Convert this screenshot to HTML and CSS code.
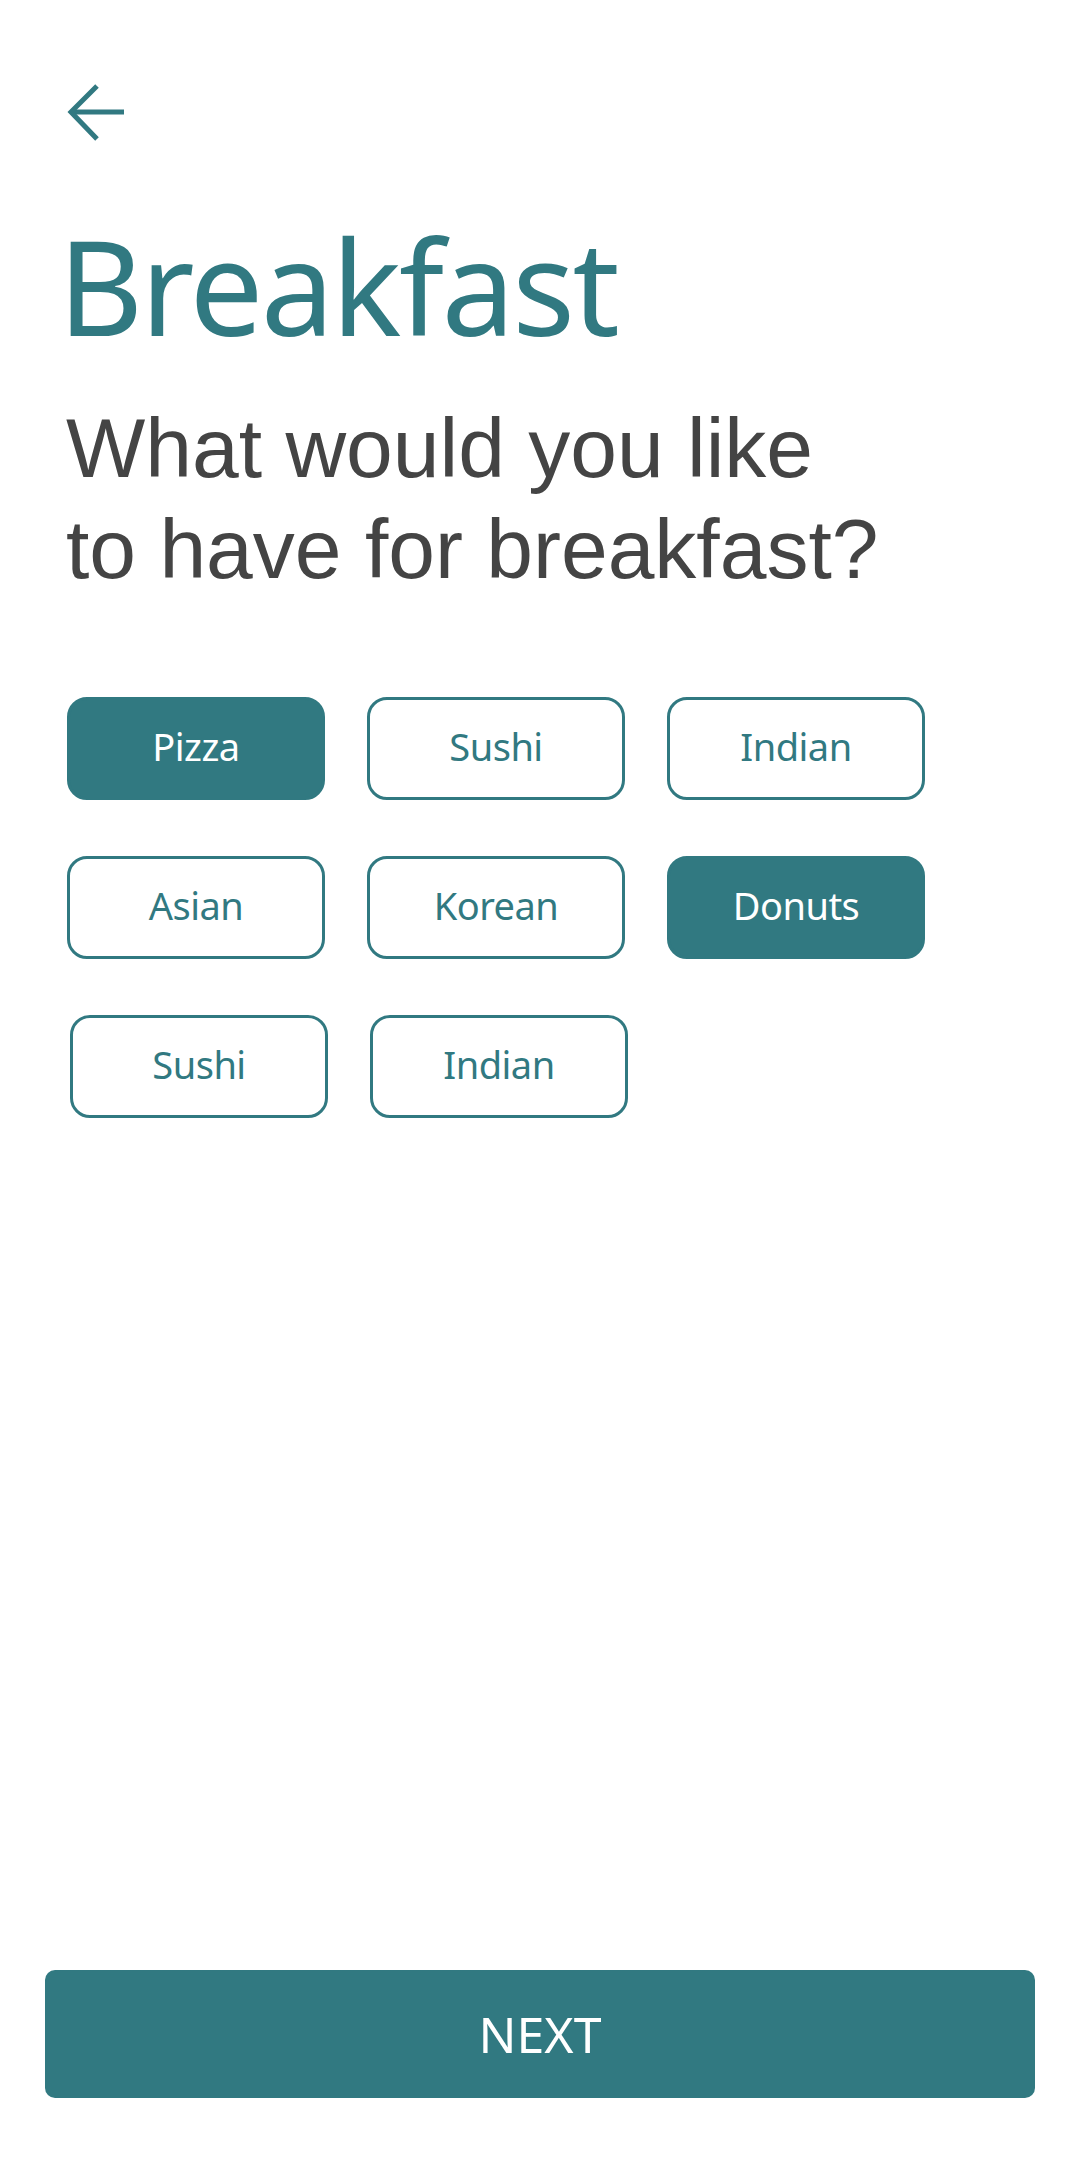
FILE: index.html
```html
<!DOCTYPE html>
<html lang="en">
<head>
<meta charset="utf-8">
<title>Breakfast</title>
<link rel="stylesheet" href="styles.css">
</head>
<body>
<div class="page">
  <div class="top">
    <button class="back" aria-label="Back">
      <svg width="60" height="60" viewBox="0 0 60 60" fill="none" stroke="#317981" stroke-width="5" stroke-linecap="butt" stroke-linejoin="miter">
        <path d="M58 29H6"/>
        <path d="M31 3L5 29L31 56"/>
      </svg>
    </button>
  </div>
  <h1 class="title">Breakfast</h1>
  <p class="question">What would you like<br>to have for breakfast?</p>
  <div class="chips">
    <div class="chip-row">
      <button class="chip selected">Pizza</button>
      <button class="chip">Sushi</button>
      <button class="chip">Indian</button>
    </div>
    <div class="chip-row">
      <button class="chip">Asian</button>
      <button class="chip">Korean</button>
      <button class="chip selected">Donuts</button>
    </div>
    <div class="chip-row shifted">
      <button class="chip">Sushi</button>
      <button class="chip">Indian</button>
    </div>
  </div>
  <div class="spacer"></div>
  <button class="next">NEXT</button>
</div>
</body>
</html>
```

FILE: styles.css
```css
* { box-sizing: border-box; }
html, body { margin: 0; padding: 0; background: #ffffff; }
.page {
  width: 1080px;
  height: 2160px;
  display: flex;
  flex-direction: column;
  font-family: "Noto Sans", "Open Sans", sans-serif;
}
.top {
  padding: 83px 0 0 66px;
  height: 145px;
}
.back {
  display: block;
  padding: 0;
  margin: 0;
  border: 0;
  background: none;
  width: 60px;
  height: 60px;
}
.back svg { display: block; }
.title {
  margin: 55px 0 0 58px;
  font-family: "Noto Sans", "Open Sans", sans-serif;
  font-weight: 400;
  font-size: 131px;
  line-height: 170px;
  letter-spacing: -2.6px;
  color: #317981;
}
.question {
  margin: 28px 0 0 66px;
  font-family: "Liberation Sans", Arial, sans-serif;
  font-size: 84px;
  line-height: 101px;
  color: #444444;
}
.chips {
  margin: 97px 0 0 67px;
  display: flex;
  flex-direction: column;
  gap: 56px;
}
.chip-row {
  display: flex;
  gap: 42px;
}
.chip-row.shifted { padding-left: 3px; }
.chip {
  width: 258px;
  height: 103px;
  border: 3px solid #317981;
  border-radius: 20px;
  background: #ffffff;
  color: #317981;
  font-family: "Noto Sans", "Open Sans", sans-serif;
  font-size: 38px;
  letter-spacing: -0.5px;
  padding: 0 0 5px 0;
  display: flex;
  align-items: center;
  justify-content: center;
}
.chip.selected {
  background: #317981;
  color: #ffffff;
}
.spacer { flex: 1; }
.next {
  margin: 0 45px 62px 45px;
  height: 128px;
  border: 0;
  border-radius: 10px;
  background: #317981;
  color: #ffffff;
  font-family: "Noto Sans", "Open Sans", sans-serif;
  font-size: 50px;
  padding: 0;
}
```
